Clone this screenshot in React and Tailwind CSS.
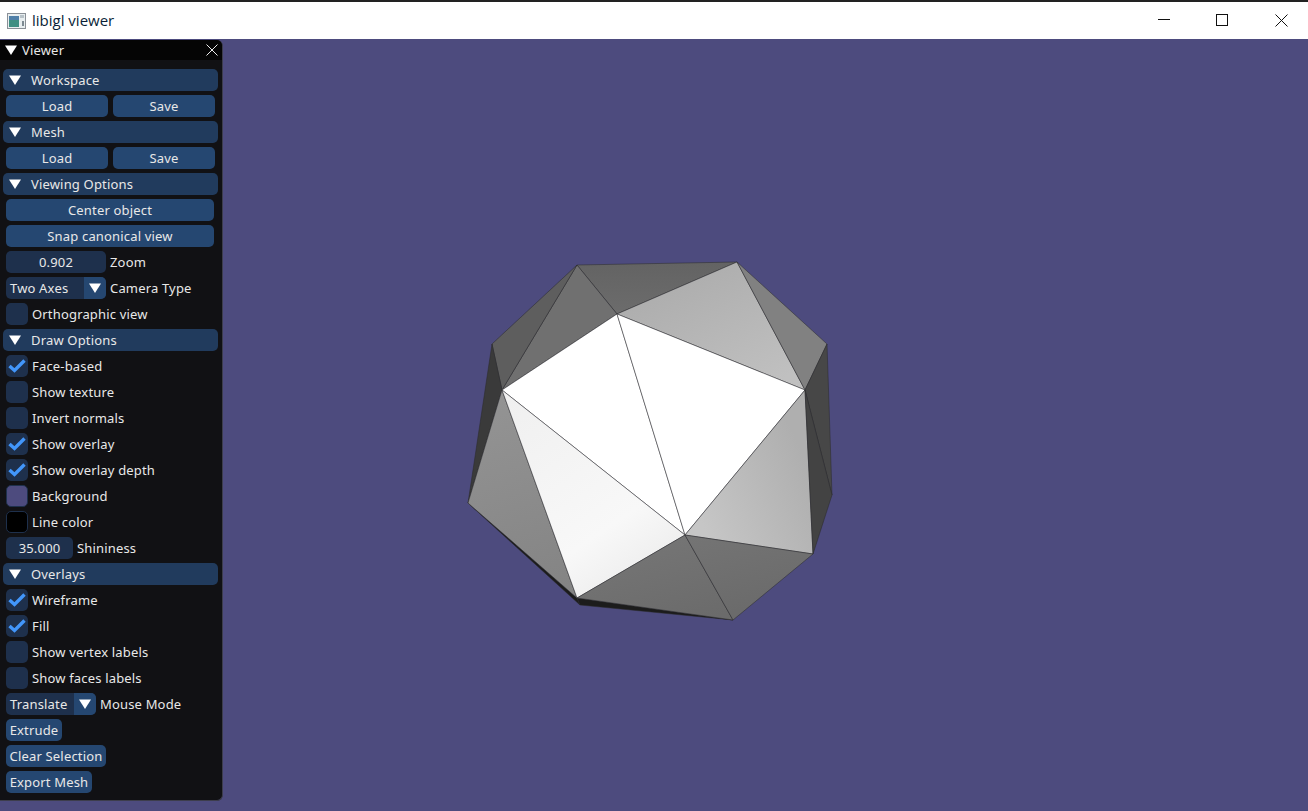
import React from 'react';

// imgui triangle, used by headers and combos
function Arrow({ className = '' }) {
    return (
        <svg width="12" height="10" viewBox="0 0 12 10" className={className}>
            <path d="M0 0.5 H12 L6 10 Z" fill="#fff" />
        </svg>
    );
}

function Header({ children }) {
    return (
        <div className="h-[22px] ml-[3px] mr-[4px] rounded-[5px] bg-[#213b5d] flex items-center pl-[6px] shrink-0">
            <Arrow className="shrink-0" />
            <span className="ml-[10px]">{children}</span>
        </div>
    );
}

function Button({ children, className = '' }) {
    return (
        <div className={`h-[22px] rounded-[5px] bg-[#254771] flex items-center justify-center shrink-0 ${className}`}>
            {children}
        </div>
    );
}

function Row({ children }) {
    return <div className="h-[22px] ml-[6px] flex items-center shrink-0">{children}</div>;
}

function Check({ label, checked }) {
    return (
        <Row>
            <div className="w-[22px] h-[22px] rounded-[5px] bg-[#1e304c] flex items-center justify-center">
                {checked && (
                    <svg width="18" height="14" viewBox="0 0 18 14">
                        <path d="M1.5 7 L6.5 11.5 L16.5 1.5" fill="none" stroke="#4296fa" strokeWidth="3.4" />
                    </svg>
                )}
            </div>
            <span className="ml-[4px]">{label}</span>
        </Row>
    );
}

function Swatch({ label, className }) {
    return (
        <Row>
            <div className={`w-[22px] h-[22px] rounded-[5px] border border-[#1e304c] ${className}`} />
            <span className="ml-[4px]">{label}</span>
        </Row>
    );
}

function Combo({ value, label, className, textClass = 'w-[78px]' }) {
    return (
        <Row>
            <div className={`h-[22px] rounded-[5px] bg-[#1e304c] flex items-center overflow-hidden ${className}`}>
                <span className={`pl-[4px] ${textClass}`}>{value}</span>
                <div className="w-[22px] h-[22px] bg-[#254771] flex items-center justify-center">
                    <Arrow />
                </div>
            </div>
            <span className="ml-[4px]">{label}</span>
        </Row>
    );
}

function Field({ value, label, className }) {
    return (
        <Row>
            <div className={`h-[22px] rounded-[5px] bg-[#1e304c] flex items-center justify-center ${className}`}>{value}</div>
            <span className="ml-[4px]">{label}</span>
        </Row>
    );
}

function Panel() {
    return (
        <div className="w-[223px] h-[761px] mt-px shrink-0 rounded-r-[6px] bg-[#111114] border-r border-b border-[#3d3d4c] text-[13px] tracking-[0.17px] leading-[14px] text-[#e8e8e8] flex flex-col overflow-hidden font-['Noto_Sans',sans-serif]">
            <div className="h-[20px] bg-[#050505] flex items-center pl-[5px] pr-[4px] shrink-0">
                <Arrow />
                <span className="ml-[5px]">Viewer</span>
                <svg width="12" height="12" viewBox="0 0 12 12" className="ml-auto">
                    <path d="M0.5 0.5 L11.5 11.5 M11.5 0.5 L0.5 11.5" stroke="#eee" strokeWidth="1" />
                </svg>
            </div>
            <div className="flex flex-col gap-[4px] pt-[9px]">
                <Header>Workspace</Header>
                <Row>
                    <Button className="w-[102px]">Load</Button>
                    <Button className="w-[102px] ml-[5px]">Save</Button>
                </Row>
                <Header>Mesh</Header>
                <Row>
                    <Button className="w-[102px]">Load</Button>
                    <Button className="w-[102px] ml-[5px]">Save</Button>
                </Row>
                <Header>Viewing Options</Header>
                <Row><Button className="w-[208px]">Center object</Button></Row>
                <Row><Button className="w-[208px]">Snap canonical view</Button></Row>
                <Field value="0.902" label="Zoom" className="w-[100px]" />
                <Combo value="Two Axes" label="Camera Type" className="w-[100px]" />
                <Check label="Orthographic view" />
                <Header>Draw Options</Header>
                <Check label="Face-based" checked />
                <Check label="Show texture" />
                <Check label="Invert normals" />
                <Check label="Show overlay" checked />
                <Check label="Show overlay depth" checked />
                <Swatch label="Background" className="bg-[#4d4b7e]" />
                <Swatch label="Line color" className="bg-black" />
                <Field value="35.000" label="Shininess" className="w-[67px]" />
                <Header>Overlays</Header>
                <Check label="Wireframe" checked />
                <Check label="Fill" checked />
                <Check label="Show vertex labels" />
                <Check label="Show faces labels" />
                <Combo value="Translate" label="Mouse Mode" className="w-[90px]" textClass="w-[68px]" />
                <Row><Button className="w-[56px]">Extrude</Button></Row>
                <Row><Button className="w-[100px]">Clear Selection</Button></Row>
                <Row><Button className="w-[86px]">Export Mesh</Button></Row>
            </div>
        </div>
    );
}

// the polyhedron, coordinates are page pixels
const V = {
    A: [577, 265], B: [737, 262], C: [617, 314], D: [492, 344], E: [502, 390],
    F: [827, 344], G: [805, 390], H: [468, 503], I: [832, 495], J: [685, 535],
    K: [813, 554], L: [577, 598], M: [733, 620], N: [580, 605],
};

const FACES = [
    ['H', 'L', 'N', '#1c1c1c'],
    ['L', 'M', 'N', '#1c1c1c'],
    ['A', 'B', 'C', 'url(#top)'],
    ['B', 'C', 'G', 'url(#upper)'],
    ['B', 'F', 'G', '#818181'],
    ['A', 'C', 'E', '#707070'],
    ['A', 'D', 'E', '#5e5e5e'],
    ['D', 'E', 'H', '#3a3a3a'],
    ['C', 'E', 'J', '#ffffff'],
    ['C', 'G', 'J', '#ffffff'],
    ['E', 'H', 'L', 'url(#leftFace)'],
    ['E', 'L', 'J', 'url(#whiteFace)'],
    ['G', 'J', 'K', 'url(#rightFace)'],
    ['F', 'G', 'I', '#474747'],
    ['G', 'I', 'K', '#434343'],
    ['J', 'L', 'M', 'url(#bottomFace)'],
    ['J', 'K', 'M', 'url(#bottomFace)'],
];

function Mesh() {
    return (
        <svg viewBox="223 39 1085 772" className="flex-1 h-full block">
            <defs>
                <linearGradient id="top" gradientUnits="userSpaceOnUse" x1="640" y1="262" x2="640" y2="314">
                    <stop offset="0" stopColor="#636363" />
                    <stop offset="1" stopColor="#6c6c6c" />
                </linearGradient>
                <linearGradient id="upper" gradientUnits="userSpaceOnUse" x1="700" y1="270" x2="760" y2="390">
                    <stop offset="0" stopColor="#aeaeae" />
                    <stop offset="1" stopColor="#c0c0c0" />
                </linearGradient>
                <linearGradient id="leftFace" gradientUnits="userSpaceOnUse" x1="500" y1="400" x2="560" y2="590">
                    <stop offset="0" stopColor="#939393" />
                    <stop offset="1" stopColor="#848484" />
                </linearGradient>
                <linearGradient id="whiteFace" gradientUnits="userSpaceOnUse" x1="510" y1="400" x2="640" y2="590">
                    <stop offset="0" stopColor="#f0f0f0" />
                    <stop offset="0.7" stopColor="#f8f8f8" />
                    <stop offset="1" stopColor="#ececec" />
                </linearGradient>
                <linearGradient id="rightFace" gradientUnits="userSpaceOnUse" x1="700" y1="520" x2="810" y2="470">
                    <stop offset="0" stopColor="#c6c6c6" />
                    <stop offset="1" stopColor="#afafaf" />
                </linearGradient>
                <linearGradient id="bottomFace" gradientUnits="userSpaceOnUse" x1="680" y1="540" x2="700" y2="620">
                    <stop offset="0" stopColor="#747474" />
                    <stop offset="1" stopColor="#6b6b6b" />
                </linearGradient>
            </defs>
            {FACES.map(([a, b, c, fill]) => (
                <polygon
                    key={a + b + c}
                    points={`${V[a]} ${V[b]} ${V[c]}`}
                    fill={fill}
                    stroke="#2a2a2a"
                    strokeWidth="0.5"
                    strokeLinejoin="round"
                />
            ))}
        </svg>
    );
}

function TitleBar() {
    return (
        <div className="h-[39px] bg-white border-t-2 border-[#222] flex items-center shrink-0 font-['Open_Sans',sans-serif] text-[15px] text-[#0a1f38]">
            <svg width="19" height="16" viewBox="0 0 19 16" className="ml-[7px] mt-[1px]">
                <rect x="0.5" y="0.5" width="18" height="15" fill="#e8eef0" stroke="#8a9097" />
                <rect x="2" y="3" width="10" height="11" fill="#3f8f83" />
                <rect x="2" y="3" width="10" height="4" fill="#4f7fa8" />
                <rect x="13" y="2" width="4" height="3" fill="#b8c2c8" />
                <rect x="15" y="8" width="2" height="5" fill="#7d8a92" />
            </svg>
            <span className="ml-[6px]">libigl viewer</span>
            <div className="ml-auto flex items-center mb-[1px]">
                <svg width="12" height="12" viewBox="0 0 12 12" className="mr-[46px]">
                    <path d="M0 5.5 H12" stroke="#111" />
                </svg>
                <svg width="12" height="12" viewBox="0 0 12 12" className="mr-[47px]">
                    <rect x="0.5" y="0.5" width="11" height="11" fill="none" stroke="#111" />
                </svg>
                <svg width="13" height="13" viewBox="0 0 13 13" className="mr-[20px]">
                    <path d="M0.5 0.5 L12.5 12.5 M12.5 0.5 L0.5 12.5" stroke="#111" />
                </svg>
            </div>
        </div>
    );
}

export default function App() {
    return (
        <div className="w-[1308px] h-[811px] flex flex-col overflow-hidden">
            <TitleBar />
            <div className="flex-1 flex bg-[#4d4b7e] min-h-0">
                <Panel />
                <Mesh />
            </div>
        </div>
    );
}
